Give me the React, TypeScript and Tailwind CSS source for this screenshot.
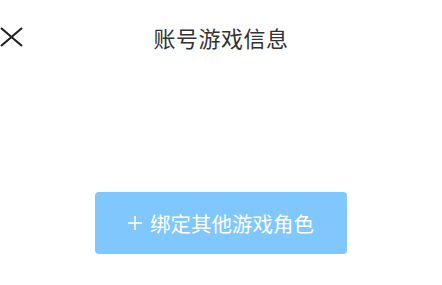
export default function App() {
  return (
    <div
      className="w-[442px] h-[285px] bg-white flex flex-col"
      style={{ fontFamily: '"Noto Sans CJK SC", "Noto Sans", sans-serif' }}
    >
      <div className="h-[74px] grid grid-cols-[1fr_auto_1fr] items-center">
        <div className="flex items-center">
          <svg width="24" height="20" viewBox="0 0 24 20">
            <path d="M1 1 L22 19 M22 1 L1 19" stroke="#222" strokeWidth="2.2" fill="none" />
          </svg>
        </div>
        <div className="text-[22px] leading-none text-[#333] tracking-[0.5px]">账号游戏信息</div>
        <div />
      </div>
      <div className="mt-[118px] flex justify-center">
        <button className="w-[252px] h-[62px] rounded-[4px] bg-[#80c7fd] text-white text-[20.5px] leading-none flex items-center justify-center gap-[8px]">
          <svg width="14" height="14" viewBox="0 0 14 14">
            <path d="M7 0 V14 M0 7 H14" stroke="white" strokeWidth="1.6" fill="none" />
          </svg>
          <span>绑定其他游戏角色</span>
        </button>
      </div>
    </div>
  );
}
